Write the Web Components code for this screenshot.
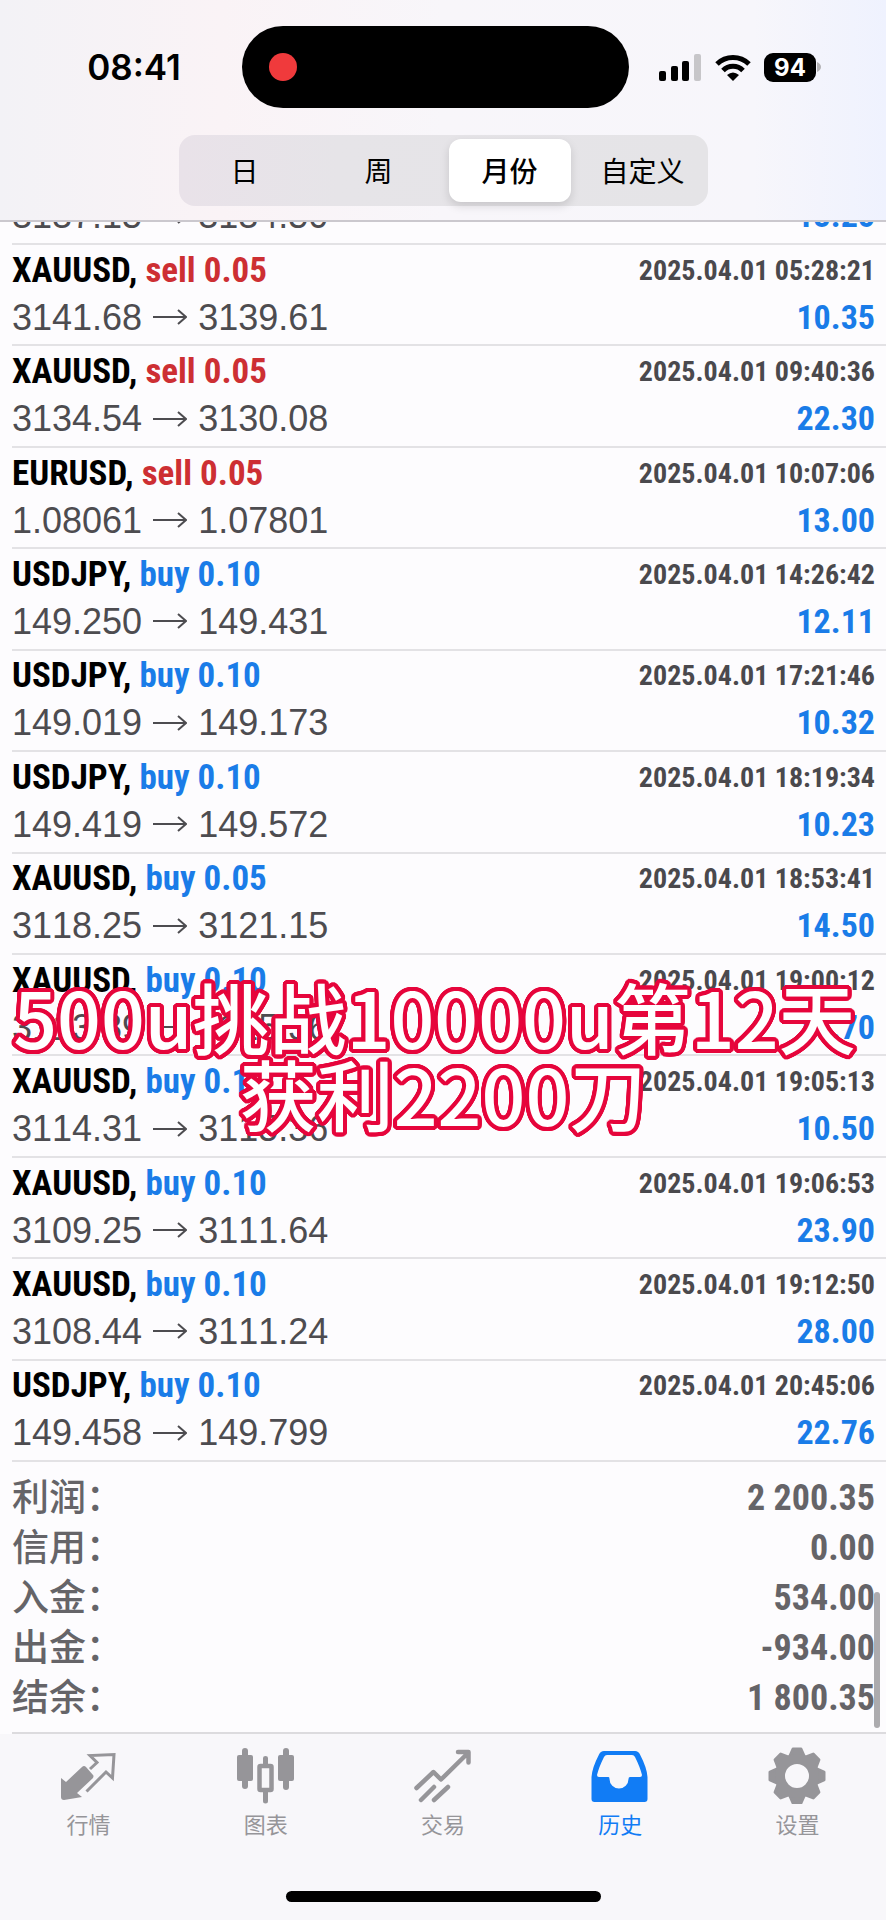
<!DOCTYPE html>
<html lang="zh-CN">
<head>
<meta charset="utf-8">
<title>历史</title>
<style>
  body {
    margin: 0;
    background: #fdfcfe;
    color: #000;
    font-family: "Liberation Sans", "Noto Sans CJK SC", sans-serif;
  }
</style>
</head>
<body>
<history-screen></history-screen>

<script>
const condensed = '"Liberation Sans Narrow", "Roboto Condensed", "Liberation Sans", "Noto Sans CJK SC", sans-serif';

const deals = [
  ["XAUUSD", "sell", "0.05", "3137.15", "3134.50", "", "13.25"],
  ["XAUUSD", "sell", "0.05", "3141.68", "3139.61", "2025.04.01 05:28:21", "10.35"],
  ["XAUUSD", "sell", "0.05", "3134.54", "3130.08", "2025.04.01 09:40:36", "22.30"],
  ["EURUSD", "sell", "0.05", "1.08061", "1.07801", "2025.04.01 10:07:06", "13.00"],
  ["USDJPY", "buy", "0.10", "149.250", "149.431", "2025.04.01 14:26:42", "12.11"],
  ["USDJPY", "buy", "0.10", "149.019", "149.173", "2025.04.01 17:21:46", "10.32"],
  ["USDJPY", "buy", "0.10", "149.419", "149.572", "2025.04.01 18:19:34", "10.23"],
  ["XAUUSD", "buy", "0.05", "3118.25", "3121.15", "2025.04.01 18:53:41", "14.50"],
  ["XAUUSD", "buy", "0.10", "3113.89", "3115.36", "2025.04.01 19:00:12", "14.70"],
  ["XAUUSD", "buy", "0.10", "3114.31", "3115.36", "2025.04.01 19:05:13", "10.50"],
  ["XAUUSD", "buy", "0.10", "3109.25", "3111.64", "2025.04.01 19:06:53", "23.90"],
  ["XAUUSD", "buy", "0.10", "3108.44", "3111.24", "2025.04.01 19:12:50", "28.00"],
  ["USDJPY", "buy", "0.10", "149.458", "149.799", "2025.04.01 20:45:06", "22.76"],
];

const totals = [
  ["利润", "2 200.35"],
  ["信用", "0.00"],
  ["入金", "534.00"],
  ["出金", "-934.00"],
  ["结余", "1 800.35"],
];

class StatusBar extends HTMLElement {
  constructor() {
    super();
    this.attachShadow({ mode: "open" }).innerHTML = `
    <style>
      :host {
        display: grid;
        grid-template-columns: 242px 1fr 257px;
        align-items: center;
        height: 82px;
        padding-top: 26px;
      }
      time {
        padding-left: 26px;
        text-align: center;
        font: 600 35px/44px Inter, sans-serif;
      }
      .island {
        display: flex;
        align-items: center;
        height: 82px;
        padding-left: 27px;
        box-sizing: border-box;
        border-radius: 41px;
        background: #000;
      }
      .rec {
        width: 28px;
        height: 28px;
        border-radius: 50%;
        background: #f03a3c;
      }
      .icons {
        display: flex;
        align-items: center;
        gap: 13px;
        padding-left: 30px;
      }
      .battery {
        display: flex;
        align-items: center;
        gap: 1px;
      }
      .level {
        width: 52px;
        border-radius: 9px;
        background: #000;
        color: #fff;
        text-align: center;
        font: 700 24px/29px Inter, sans-serif;
      }
    </style>
    <time>08:41</time>
    <div class="island"><div class="rec"></div></div>
    <div class="icons">
      <svg width="43" height="27" viewBox="0 0 43 27">
        <rect x="0" y="17" width="7" height="10" rx="2"/>
        <rect x="12" y="12" width="7" height="15" rx="2"/>
        <rect x="23" y="7" width="7" height="20" rx="2"/>
        <rect x="35" y="0" width="7" height="27" rx="2" fill="#c7c6c9"/>
      </svg>
      <svg width="36" height="27" viewBox="0 0 36 27">
        <g fill="none" stroke="#000" stroke-width="5">
          <path d="M2 10A23 23 0 0 1 34 10"/>
          <path d="M8 16.500A14 14 0 0 1 28 16.500"/>
        </g>
        <path d="M12 21Q18 16 24 21L18 27Z"/>
      </svg>
      <div class="battery">
        <div class="level">94</div>
        <svg width="4" height="10" viewBox="0 0 4 10"><path d="M0 0Q4 2 4 5Q4 8 0 10Z" fill="#b4b3b6"/></svg>
      </div>
    </div>`;
  }
}
customElements.define("status-bar", StatusBar);

class PeriodPicker extends HTMLElement {
  constructor() {
    super();
    this.attachShadow({ mode: "open" }).innerHTML = `
    <style>
      :host {
        display: grid;
        grid-template-columns: 132px 136px 126px 135px;
        width: 529px;
        height: 71px;
        margin: 27px auto 14px;
        border-radius: 16px;
        background: linear-gradient(90deg, #e9e2e9, #e6e4e8 30%, #e5e4e7);
      }
      button {
        margin: 0;
        padding: 0 0 2px;
        border: 0;
        background: none;
        color: #000;
        font: 400 28px/40px "Noto Sans CJK SC", sans-serif;
      }
      button:first-child {
        background: linear-gradient(#cac8cd, #cac8cd) right / 2px 40px no-repeat;
      }
      button:last-child { padding-left: 5px; }
      button[aria-pressed="true"] {
        margin: 4px 2px;
        border-radius: 12px;
        background: #fff;
        box-shadow: 0 4px 10px #0002;
        font-weight: 500;
      }
    </style>
    <button type="button">日</button>
    <button type="button">周</button>
    <button type="button" aria-pressed="true">月份</button>
    <button type="button">自定义</button>`;
  }
}
customElements.define("period-picker", PeriodPicker);

class DealRow extends HTMLElement {
  set deal([symbol, side, volume, open, close, time, profit]) {
    // a row scrolled under the header only shows its price line
    const head = time ? `
    <div class="title">${symbol}, <span class="${side}">${side} ${volume}</span></div>
    <div class="time">${time}</div>` : "";
    this.attachShadow({ mode: "open" }).innerHTML = `
    <style>
      :host {
        display: grid;
        grid-template-columns: 1fr auto;
        grid-auto-rows: 47px;
        align-content: center;
        flex: 1 0 96px;
        box-sizing: border-box;
        padding: 0 11px 2px 0;
        border-bottom: 2px solid #e3e2e5;
      }
      div { white-space: nowrap; }
      .title { font: 700 35px/47px ${condensed}; }
      .profit { font: 700 34px/47px ${condensed}; }
      .time { font: 700 28px/47px ${condensed}; color: #4a494d; }
      .buy, .profit { color: #1a7ce8; }
      .sell { color: #cd2f33; }
      .price {
        display: flex;
        align-items: center;
        gap: 11px;
        color: #4d4c50;
        font-size: 36px;
        line-height: 47px;
        font-kerning: none;
      }
      .time, .profit { text-align: right; }
    </style>${head}
    <div class="price">
      <span>${open}</span>
      <svg width="34" height="16" viewBox="0 0 34 16" fill="none" stroke="currentColor" stroke-width="2"><path d="M0 8H32M25 1L33 8L25 15"/></svg>
      <span>${close}</span>
    </div>
    <div class="profit">${profit}</div>`;
  }
}
customElements.define("deal-row", DealRow);

class AccountTotals extends HTMLElement {
  constructor() {
    super();
    const rows = totals.map(([name, value]) => `<dt>${name}：</dt><dd>${value}</dd>`).join("");
    this.attachShadow({ mode: "open" }).innerHTML = `
    <style>
      :host { display: block; padding: 10px 11px 10px 0; border-bottom: 2px solid #dcdbde; }
      dl {
        display: grid;
        grid-template-columns: auto 1fr;
        margin: 0;
        color: #656468;
      }
      dt { padding-bottom: 4px; font: 500 37px/46px "Noto Sans CJK SC", sans-serif; }
      dd { margin: 0; padding-top: 2px; text-align: right; font: 700 36px/48px ${condensed}; }
    </style>
    <dl>${rows}</dl>`;
  }
}
customElements.define("account-totals", AccountTotals);

class TabItem extends HTMLElement {
  constructor() {
    super();
    this.attachShadow({ mode: "open" }).innerHTML = `
    <style>
      :host { display: block; flex: 1; color: #969599; }
      :host([current]) { color: #117cf5; }
      a {
        display: flex;
        flex-direction: column;
        align-items: center;
        gap: 3px;
        color: inherit;
        text-decoration: none;
        font: 400 22px/32px "Noto Sans CJK SC", sans-serif;
      }
    </style>
    <a href="#"><slot name="icon"></slot><slot></slot></a>`;
  }
}
customElements.define("tab-item", TabItem);

class TabBar extends HTMLElement {
  constructor() {
    super();
    const teeth = [0, 45, 90, 135, 180, 225, 270, 315]
      .map((a) => `<path d="M20 12L24 3H32L36 12Z" transform="rotate(${a} 28 30)"/>`)
      .join("");
    this.attachShadow({ mode: "open" }).innerHTML = `
    <style>
      :host { display: block; background: #f8f7fa; padding: 12px 0 18px; }
      nav { display: flex; }
      .home {
        width: 315px;
        height: 11px;
        margin: 52px auto 0;
        border-radius: 6px;
        background: #000;
      }
    </style>
    <nav>
      <tab-item>
        <svg slot="icon" width="58" height="58" viewBox="0 0 58 58">
          <path fill="currentColor" d="M1 32L6 36L22 21Q24 19 26 21L33 29Q34 30 33 32L17 47L22 51L4 54Q1 54 1 51Z"/>
          <path fill="none" stroke="currentColor" stroke-width="3" d="M30 23L37 16.500L30 9.500L54 8.500L52.500 32L46 26L26.500 45.500"/>
        </svg>行情
      </tab-item>
      <tab-item>
        <svg slot="icon" width="58" height="58" viewBox="0 0 58 58" fill="currentColor">
          <rect x="0" y="9" width="16" height="26" rx="2"/>
          <rect x="5" y="2" width="6" height="41" rx="3"/>
          <rect x="41" y="9" width="16" height="26" rx="2"/>
          <rect x="46" y="2" width="6" height="42" rx="3"/>
          <rect x="22.500" y="20" width="12" height="24" rx="1" fill="none" stroke="currentColor" stroke-width="4.500"/>
          <path d="M26 19V12Q26 10 28.500 10T31 12V19ZM26 45V55Q26 57.500 28.500 57.500T31 55V45Z"/>
        </svg>图表
      </tab-item>
      <tab-item>
        <svg slot="icon" width="58" height="58" viewBox="0 0 58 58" fill="none" stroke="currentColor" stroke-width="4.500" stroke-linecap="round" stroke-linejoin="round">
          <path d="M2.500 42L19.500 26L27 33.500L54 7M44 6H54.500V16.500M7 54L20 41M20 54L34 41"/>
        </svg>交易
      </tab-item>
      <tab-item current>
        <svg slot="icon" width="58" height="58" viewBox="0 0 58 58" fill="currentColor" fill-rule="evenodd">
          <path d="M13 5H44Q47.500 5 49 8.500Q56 22 56.500 31V53Q56.500 56 53.500 56H3.500Q0.500 56 0.500 53V31Q1 22 8 8.500Q9.500 5 13 5ZM16 9Q14 9 13 11Q8 21 6 29Q6 31 8 31H17.500Q18.500 31 18.500 33A9.500 9.500 0 0 0 37.500 33Q37.500 31 39 31H49Q51 31 51 29Q49 21 44 11Q43 9 41 9Z"/>
        </svg>历史
      </tab-item>
      <tab-item>
        <svg slot="icon" width="58" height="58" viewBox="0 0 56 58">
          <g fill="currentColor" stroke="currentColor" stroke-width="3" stroke-linejoin="round">${teeth}</g>
          <circle cx="28" cy="30" r="17" fill="none" stroke="currentColor" stroke-width="10"/>
        </svg>设置
      </tab-item>
    </nav>
    <div class="home"></div>`;
  }
}
customElements.define("tab-bar", TabBar);

class VideoCaption extends HTMLElement {
  constructor() {
    super();
    // outline built from shadows so that it stays behind every glyph
    const outline = [];
    for (let i = 0; i < 32; i++) {
      const a = (i * Math.PI) / 16;
      outline.push(`${(4 * Math.cos(a)).toFixed(2)}px ${(4 * Math.sin(a)).toFixed(2)}px 0 #e6063c`);
    }
    this.attachShadow({ mode: "open" }).innerHTML = `
    <style>
      :host {
        display: block;
        position: absolute;
        top: 977px;
        left: 0;
        right: 0;
        text-align: center;
        color: #fff;
        font: 500 77px/77px "Noto Sans CJK SC", sans-serif;
        text-shadow: ${outline.join(", ")};
        white-space: nowrap;
        pointer-events: none;
      }
    </style>
    <slot></slot>`;
  }
}
customElements.define("video-caption", VideoCaption);

class HistoryScreen extends HTMLElement {
  constructor() {
    super();
    this.attachShadow({ mode: "open" }).innerHTML = `
    <style>
      :host { display: flex; flex-direction: column; min-height: 100vh; position: relative; }
      header {
        border-bottom: 2px solid #cbc8ce;
        background: linear-gradient(90deg, #f3f2f6, #faf3f6 25%, #f8f6fa 50%, #f7f6fb 85%, #eff2fe);
      }
      main {
        display: flex;
        flex: 1;
        flex-direction: column;
        position: relative;
        padding-left: 12px;
      }
      .clipped {
        display: flex;
        flex-direction: column;
        justify-content: flex-end;
        height: 23px;
        overflow: hidden;
      }
      .clipped deal-row { flex: none; padding-bottom: 4px; }
      .scroll {
        position: absolute;
        right: 6px;
        bottom: 6px;
        width: 6px;
        height: 136px;
        border-radius: 3px;
        background: #97969acc;
      }
    </style>
    <header>
      <status-bar></status-bar>
      <period-picker></period-picker>
    </header>
    <main>
      <div class="clipped"></div>
      <account-totals></account-totals>
      <div class="scroll"></div>
    </main>
    <tab-bar></tab-bar>
    <video-caption>500u挑战10000u第12天&nbsp;<br>获利2200刀</video-caption>`;

    const clipped = this.shadowRoot.querySelector(".clipped");
    const summary = this.shadowRoot.querySelector("account-totals");
    deals.forEach((deal, i) => {
      const row = document.createElement("deal-row");
      row.deal = deal;
      if (i === 0) clipped.append(row);
      else summary.before(row);
    });
  }
}
customElements.define("history-screen", HistoryScreen);
</script>
</body>
</html>
